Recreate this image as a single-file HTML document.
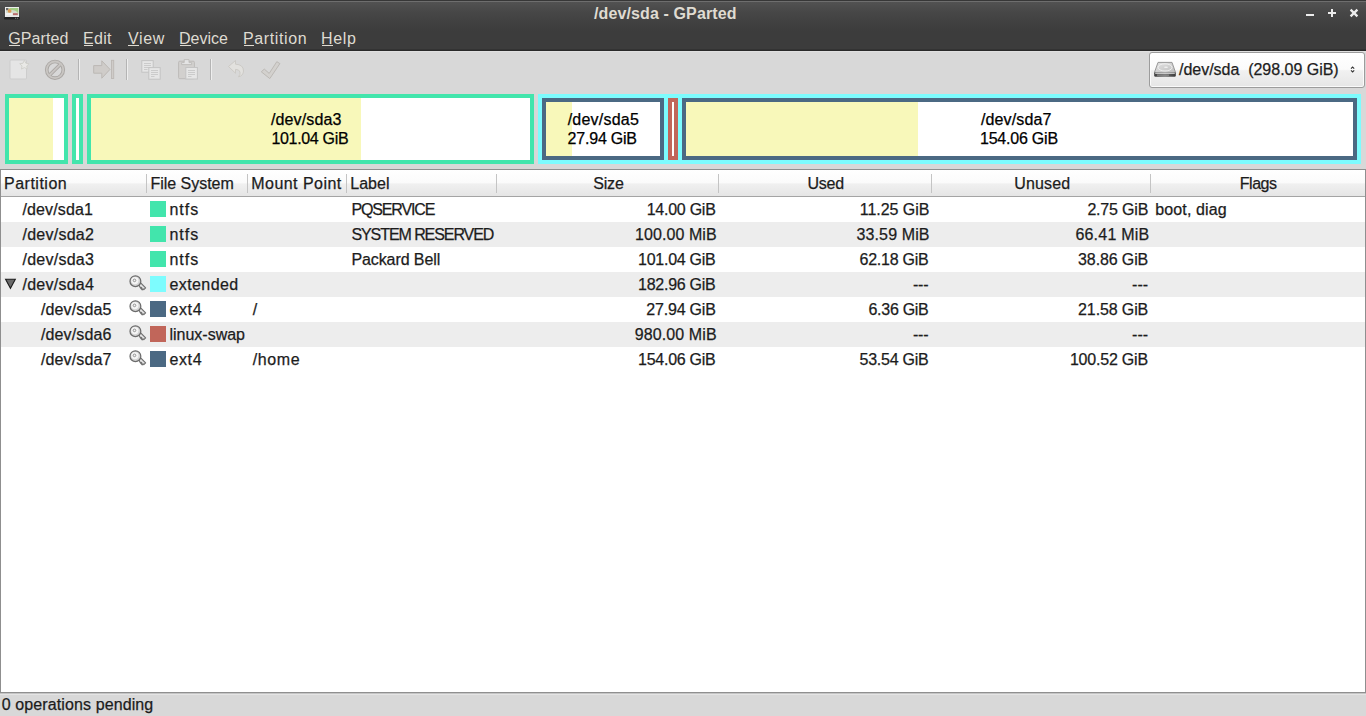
<!DOCTYPE html>
<html><head><meta charset="utf-8">
<style>
*{margin:0;padding:0;box-sizing:border-box}
html,body{width:1366px;height:716px;overflow:hidden;background:#d8d8d8;font-family:"Liberation Sans",sans-serif;}
.a{position:absolute}
.t{position:absolute;white-space:pre;line-height:20px;height:20px;font-size:16px;color:#1c1c1c;-webkit-text-stroke:0.25px currentColor}
#title{left:0;top:0;width:1366px;height:51px;background:linear-gradient(#525252 2px,#474747 12px,#3f3f3f 25px,#3c3c3c 32px,#3c3c3c 49px,#2a2a2a 50px)}
.top0{left:0;top:0;width:1366px;height:1px;background:#373737}
.top1{left:0;top:1px;width:1366px;height:1px;background:#6e6e6e}
#toolbar{left:0;top:51px;width:1366px;height:41px;background:#d8d8d8}
.sep{position:absolute;top:59px;width:1px;height:21px;background:#b4b4b4;box-shadow:1px 0 0 #eeeeee}
#combo{left:1149px;top:52px;width:216px;height:36px;border:1px solid #9c9c9c;border-radius:3px;background:linear-gradient(#ffffff,#fbfbfb 48%,#f1f1f1 52%,#e6e6e6);box-shadow:inset 0 0 0 1px rgba(255,255,255,0.8)}
.box{position:absolute;border:4px solid}
#tree{left:0;top:169px;width:1366px;height:524px;background:#fff;border:1px solid #8f8f8f}
#hdr{left:1px;top:170px;width:1364px;height:27px;background:linear-gradient(#ffffff,#fbfbfb 48%,#f0f0f0 54%,#e5e5e5);border-bottom:1px solid #a4a4a4}
.hsep{position:absolute;top:174px;width:1px;height:19px;background:#c4c4c4}
.row{position:absolute;left:1px;width:1364px;height:25px}
.alt{background:#ededed}
.sw{position:absolute;width:16px;height:16px}
#status{left:0;top:694px;width:1366px;height:22px;background:#d8d8d8}

#tbline{left:0;top:51px;width:1366px;height:1px;background:#e0e0e0}
#fline{left:0;top:693px;width:1366px;height:2px;background:linear-gradient(#c4c4c4 50%,#e4e4e4 50%)}

</style></head><body>
<div id="title" class="a"><div class="a top0"></div><div class="a top1"></div></div>
<div id="toolbar" class="a"></div><div id="tbline" class="a"></div>
<div class="sep" style="left:78px"></div>
<div class="sep" style="left:126px"></div>
<div class="sep" style="left:210px"></div>
<div id="combo" class="a"></div>
<div class="box" style="left:5px;top:94px;width:63px;height:70px;border-color:#42e5ac;background:#fff"><div class="a" style="left:0;top:0;width:44px;height:100%;background:#f8f8ba"></div></div>
<div class="box" style="left:72px;top:94px;width:11px;height:70px;border-color:#42e5ac;background:#fff"></div>
<div class="box" style="left:87px;top:94px;width:447px;height:70px;border-color:#42e5ac;background:#fff"><div class="a" style="left:0;top:0;width:270px;height:100%;background:#f8f8ba"></div></div>
<div class="box" style="left:538px;top:94px;width:823px;height:70px;border-color:#7dfcfe;background:#7dfcfe"></div>
<div class="box" style="left:542px;top:98px;width:122px;height:62px;border-color:#4b6983;background:#fff"><div class="a" style="left:0;top:0;width:26px;height:100%;background:#f8f8ba"></div></div>
<div class="box" style="left:668px;top:98px;width:10px;height:62px;border-color:#c1665a;background:#fff"></div>
<div class="box" style="left:682px;top:98px;width:675px;height:62px;border-color:#4b6983;background:#fff"><div class="a" style="left:0;top:0;width:232px;height:100%;background:#f8f8ba"></div></div>
<div id="tree" class="a"></div>
<div id="hdr" class="a"></div>
<div class="hsep" style="left:146px"></div>
<div class="hsep" style="left:247px"></div>
<div class="hsep" style="left:346px"></div>
<div class="hsep" style="left:496px"></div>
<div class="hsep" style="left:718px"></div>
<div class="hsep" style="left:931px"></div>
<div class="hsep" style="left:1150px"></div>
<div class="row" style="top:197px"></div>
<div class="row alt" style="top:222px"></div>
<div class="row" style="top:247px"></div>
<div class="row alt" style="top:272px"></div>
<div class="row" style="top:297px"></div>
<div class="row alt" style="top:322px"></div>
<div class="row" style="top:347px"></div>
<div class="sw" style="left:150px;top:201px;background:#42e5ac"></div>
<div class="sw" style="left:150px;top:226px;background:#42e5ac"></div>
<div class="sw" style="left:150px;top:251px;background:#42e5ac"></div>
<div class="sw" style="left:150px;top:276px;background:#7dfcfe"></div>
<div class="sw" style="left:150px;top:301px;background:#4b6983"></div>
<div class="sw" style="left:150px;top:326px;background:#c1665a"></div>
<div class="sw" style="left:150px;top:351px;background:#4b6983"></div>
<div id="status" class="a"></div><div id="fline" class="a"></div>
<div class="t" style="left:594.00px;top:4px;font-size:16px;font-weight:700;color:#dfdbd2;letter-spacing:0.118px;-webkit-text-stroke:0;">/dev/sda - GParted</div>
<div class="t" style="left:8.20px;top:29px;font-size:16px;color:#dfdbd2;letter-spacing:0.117px;-webkit-text-stroke:0;">GParted</div>
<div class="t" style="left:83.00px;top:29px;font-size:16px;color:#dfdbd2;letter-spacing:0.333px;-webkit-text-stroke:0;">Edit</div>
<div class="t" style="left:128.00px;top:29px;font-size:16px;color:#dfdbd2;letter-spacing:0.667px;-webkit-text-stroke:0;">View</div>
<div class="t" style="left:179.00px;top:29px;font-size:16px;color:#dfdbd2;-webkit-text-stroke:0;">Device</div>
<div class="t" style="left:243.00px;top:29px;font-size:16px;color:#dfdbd2;letter-spacing:0.625px;-webkit-text-stroke:0;">Partition</div>
<div class="t" style="left:321.00px;top:29px;font-size:16px;color:#dfdbd2;letter-spacing:0.667px;-webkit-text-stroke:0;">Help</div>
<div class="t" style="left:1179.00px;top:60px;font-size:16px;color:#1e1e1e;letter-spacing:-0.019px;">/dev/sda  (298.09 GiB)</div>
<div class="t" style="left:271.00px;top:110px;font-size:16px;color:#000;letter-spacing:0.125px;">/dev/sda3</div>
<div class="t" style="left:271.40px;top:129px;font-size:16px;color:#000;letter-spacing:-0.311px;">101.04 GiB</div>
<div class="t" style="left:567.70px;top:110px;font-size:16px;color:#000;letter-spacing:0.225px;">/dev/sda5</div>
<div class="t" style="left:567.60px;top:129px;font-size:16px;color:#000;letter-spacing:-0.213px;">27.94 GiB</div>
<div class="t" style="left:981.00px;top:110px;font-size:16px;color:#000;letter-spacing:0.125px;">/dev/sda7</div>
<div class="t" style="left:980.00px;top:129px;font-size:16px;color:#000;letter-spacing:-0.222px;">154.06 GiB</div>
<div class="t" style="left:4.00px;top:174px;font-size:16px;letter-spacing:0.500px;">Partition</div>
<div class="t" style="left:150.40px;top:174px;font-size:16px;letter-spacing:-0.020px;">File System</div>
<div class="t" style="left:251.30px;top:174px;font-size:16px;letter-spacing:0.450px;">Mount Point</div>
<div class="t" style="left:350.30px;top:174px;font-size:16px;">Label</div>
<div class="t" style="left:593.20px;top:174px;font-size:16px;letter-spacing:-0.167px;">Size</div>
<div class="t" style="left:807.50px;top:174px;font-size:16px;letter-spacing:-0.233px;">Used</div>
<div class="t" style="left:1014.30px;top:174px;font-size:16px;letter-spacing:0.120px;">Unused</div>
<div class="t" style="left:1239.80px;top:174px;font-size:16px;letter-spacing:-0.500px;">Flags</div>
<div class="t" style="left:22.50px;top:200px;font-size:16px;letter-spacing:0.125px;">/dev/sda1</div>
<div class="t" style="left:169.40px;top:200px;font-size:16px;letter-spacing:1.000px;">ntfs</div>
<div class="t" style="left:351.40px;top:200px;font-size:16px;letter-spacing:-1.125px;">PQSERVICE</div>
<div class="t" style="left:646.70px;top:200px;font-size:16px;letter-spacing:-0.250px;">14.00 GiB</div>
<div class="t" style="left:859.80px;top:200px;font-size:16px;letter-spacing:-0.037px;">11.25 GiB</div>
<div class="t" style="left:1087.40px;top:200px;font-size:16px;letter-spacing:-0.186px;">2.75 GiB</div>
<div class="t" style="left:1155.30px;top:200px;font-size:16px;letter-spacing:0.111px;">boot, diag</div>
<div class="t" style="left:22.50px;top:225px;font-size:16px;letter-spacing:0.250px;">/dev/sda2</div>
<div class="t" style="left:169.40px;top:225px;font-size:16px;letter-spacing:1.000px;">ntfs</div>
<div class="t" style="left:351.40px;top:225px;font-size:16px;letter-spacing:-1.071px;">SYSTEM RESERVED</div>
<div class="t" style="left:635.10px;top:225px;font-size:16px;letter-spacing:0.067px;">100.00 MiB</div>
<div class="t" style="left:856.50px;top:225px;font-size:16px;letter-spacing:0.125px;">33.59 MiB</div>
<div class="t" style="left:1075.40px;top:225px;font-size:16px;letter-spacing:0.213px;">66.41 MiB</div>
<div class="t" style="left:22.50px;top:250px;font-size:16px;letter-spacing:0.250px;">/dev/sda3</div>
<div class="t" style="left:169.40px;top:250px;font-size:16px;letter-spacing:1.000px;">ntfs</div>
<div class="t" style="left:351.40px;top:250px;font-size:16px;letter-spacing:-0.091px;">Packard Bell</div>
<div class="t" style="left:638.10px;top:250px;font-size:16px;letter-spacing:-0.267px;">101.04 GiB</div>
<div class="t" style="left:859.50px;top:250px;font-size:16px;letter-spacing:-0.250px;">62.18 GiB</div>
<div class="t" style="left:1078.10px;top:250px;font-size:16px;letter-spacing:-0.125px;">38.86 GiB</div>
<div class="t" style="left:22.50px;top:275px;font-size:16px;letter-spacing:0.250px;">/dev/sda4</div>
<div class="t" style="left:169.40px;top:275px;font-size:16px;letter-spacing:0.429px;">extended</div>
<div class="t" style="left:638.10px;top:275px;font-size:16px;letter-spacing:-0.267px;">182.96 GiB</div>
<div class="t" style="left:913.10px;top:275px;font-size:16px;letter-spacing:-0.300px;">---</div>
<div class="t" style="left:1132.10px;top:275px;font-size:16px;">---</div>
<div class="t" style="left:41.00px;top:300px;font-size:16px;letter-spacing:0.125px;">/dev/sda5</div>
<div class="t" style="left:169.40px;top:300px;font-size:16px;letter-spacing:0.667px;">ext4</div>
<div class="t" style="left:252.70px;top:300px;font-size:16px;">/</div>
<div class="t" style="left:646.30px;top:300px;font-size:16px;letter-spacing:-0.200px;">27.94 GiB</div>
<div class="t" style="left:868.50px;top:300px;font-size:16px;letter-spacing:-0.286px;">6.36 GiB</div>
<div class="t" style="left:1078.10px;top:300px;font-size:16px;letter-spacing:-0.125px;">21.58 GiB</div>
<div class="t" style="left:41.00px;top:325px;font-size:16px;letter-spacing:0.125px;">/dev/sda6</div>
<div class="t" style="left:169.40px;top:325px;font-size:16px;">linux-swap</div>
<div class="t" style="left:634.70px;top:325px;font-size:16px;letter-spacing:0.111px;">980.00 MiB</div>
<div class="t" style="left:913.10px;top:325px;font-size:16px;letter-spacing:-0.300px;">---</div>
<div class="t" style="left:1132.10px;top:325px;font-size:16px;">---</div>
<div class="t" style="left:41.00px;top:350px;font-size:16px;letter-spacing:0.125px;">/dev/sda7</div>
<div class="t" style="left:169.40px;top:350px;font-size:16px;letter-spacing:0.667px;">ext4</div>
<div class="t" style="left:252.70px;top:350px;font-size:16px;letter-spacing:0.600px;">/home</div>
<div class="t" style="left:638.10px;top:350px;font-size:16px;letter-spacing:-0.267px;">154.06 GiB</div>
<div class="t" style="left:859.50px;top:350px;font-size:16px;letter-spacing:-0.250px;">53.54 GiB</div>
<div class="t" style="left:1069.90px;top:350px;font-size:16px;letter-spacing:-0.200px;">100.52 GiB</div>
<div class="t" style="left:1.80px;top:695px;font-size:16px;letter-spacing:0.105px;">0 operations pending</div>
<!-- app icon -->
<svg class="a" style="left:0;top:0" width="24" height="24" viewBox="0 0 24 24">
  <rect x="4" y="16.9" width="15.8" height="2.6" rx="1" fill="#222"/>
  <rect x="15" y="17.8" width="1.2" height="1" fill="#777"/><rect x="17" y="17.8" width="1.2" height="1" fill="#777"/>
  <rect x="5" y="7" width="14" height="10" fill="#eeeeee"/>
  <rect x="6" y="8" width="12.3" height="7.6" fill="#d4dccb"/>
  <path d="M9 8 H18.3 V14 Q17 10 11 10 Z" fill="#a2cf84"/>
  <rect x="6" y="8" width="2.4" height="2.2" fill="#6a6a6a"/>
  <circle cx="9.6" cy="10.9" r="1.9" fill="#dd9a55"/>
  <rect x="6" y="13" width="6.5" height="2.6" fill="#f2f2f2"/>
  <rect x="13" y="13.2" width="4.8" height="2" fill="#b86a6a"/>
  <rect x="6" y="15.6" width="12.3" height="1" fill="#e6e6e6"/>
</svg>
<!-- window buttons -->
<div class="a" style="left:1306px;top:13.6px;width:8.2px;height:2.5px;background:#ececec"></div>
<div class="a" style="left:1328px;top:11.8px;width:8px;height:2.6px;background:#ececec"></div>
<div class="a" style="left:1330.7px;top:9px;width:2.6px;height:8px;background:#ececec"></div>
<svg class="a" style="left:1348px;top:7px" width="12" height="12" viewBox="0 0 12 12"><path d="M2.6 2.6 L9.4 9.4 M9.4 2.6 L2.6 9.4" stroke="#ececec" stroke-width="2.3" stroke-linecap="butt"/></svg>
<!-- menu underlines -->
<div class="a" style="left:9px;top:45px;width:11px;height:1px;background:#dfdbd2"></div>
<div class="a" style="left:84px;top:45px;width:9px;height:1px;background:#dfdbd2"></div>
<div class="a" style="left:128px;top:45px;width:11px;height:1px;background:#dfdbd2"></div>
<div class="a" style="left:180px;top:45px;width:11px;height:1px;background:#dfdbd2"></div>
<div class="a" style="left:244px;top:45px;width:10px;height:1px;background:#dfdbd2"></div>
<div class="a" style="left:322px;top:45px;width:11px;height:1px;background:#dfdbd2"></div>
<!-- toolbar icons -->
<svg class="a" style="left:0;top:51px" width="300" height="40" viewBox="0 51 300 40">
  <!-- new -->
  <rect x="10" y="60" width="16.5" height="19" rx="1" fill="#e5e5e5" stroke="#cdcdcd" stroke-width="1"/>
  <path d="M24.4 60.3 L25.9 63.3 L29.1 63.7 L26.8 65.9 L27.3 69.1 L24.4 67.6 L21.5 69.1 L22 65.9 L19.7 63.7 L22.9 63.3Z" fill="#e9e9e6" stroke="#cfcfca" stroke-width="0.9"/>
  <!-- delete -->
  <circle cx="55" cy="69.8" r="8.3" fill="none" stroke="#aaa7a4" stroke-width="3.6"/>
  <path d="M49.2 75.6 L60.8 64" stroke="#aaa7a4" stroke-width="3.6"/>
  <circle cx="55" cy="69.8" r="8.3" fill="none" stroke="#c9c6c3" stroke-width="1.8"/>
  <path d="M49.6 75.2 L60.4 64.4" stroke="#c9c6c3" stroke-width="1.8"/>
  <!-- resize/move arrow -->
  <path d="M93.7 65.6 H101.8 V60.8 L110 69.4 L101.8 78.2 V73.2 H93.7Z" fill="#cfccc9" stroke="#bcb8b4" stroke-width="1"/>
  <rect x="111.5" y="60.3" width="2.2" height="18.2" fill="#cfccc9" stroke="#bcb8b4" stroke-width="0.9"/>
  <!-- copy -->
  <rect x="141.8" y="60.6" width="11.4" height="11.6" fill="#e6e6e6" stroke="#c4c4c4" stroke-width="1"/>
  <path d="M144 63.5h7M144 65.5h7M144 67.5h7M144 69.5h3.5" stroke="#c6c6c6" stroke-width="0.85"/>
  <rect x="148.8" y="67.6" width="11.4" height="11.6" fill="#e6e6e6" stroke="#c4c4c4" stroke-width="1"/>
  <path d="M151 70.5h7M151 72.5h7M151 74.5h7M151 76.5h3.5" stroke="#c6c6c6" stroke-width="0.85"/>
  <!-- paste -->
  <rect x="178.6" y="61.2" width="15.8" height="17.5" rx="1.2" fill="#d2d0ce" stroke="#bdbbb9" stroke-width="1"/>
  <path d="M184.2 59.6 H189 V62.6 H191.6 V64.6 H181.6 V62.6 H184.2Z" fill="#e4e4e4" stroke="#bdbbb9" stroke-width="0.9" stroke-linejoin="round"/>
  <rect x="185.8" y="67.5" width="11.6" height="11.5" fill="#e6e6e6" stroke="#c4c4c4" stroke-width="1"/>
  <path d="M188 70.5h7M188 72.5h7M188 74.5h7M188 76.5h3.5" stroke="#c6c6c6" stroke-width="0.85"/>
  <!-- undo -->
  <path d="M228.5 66.5 L235.5 60.5 V64.2 Q243.5 64.5 243.5 71 Q243.3 75.8 238.5 76.8 Q240.6 74.5 240 72 Q239.3 69.3 235.5 69.4 V73.2Z" fill="#e2e1de" stroke="#c9c7c3" stroke-width="0.9"/>
  <!-- apply -->
  <path d="M261.3 71.8 L264.3 69.1 L269.2 73.4 L276.8 61.7 L279.9 63.6 L269.8 78.6Z" fill="#d3d1ce" stroke="#bcb9b5" stroke-width="1"/>
</svg>
<!-- combo: disk icon + arrows -->
<svg class="a" style="left:1150px;top:56px" width="30" height="28" viewBox="1150 56 30 28">
  <defs><linearGradient id="dg" x1="0" y1="0" x2="1" y2="1"><stop offset="0" stop-color="#e4e4e4"/><stop offset="1" stop-color="#bdbdbd"/></linearGradient>
  <linearGradient id="fb" x1="0" y1="0" x2="1" y2="0"><stop offset="0" stop-color="#3e3e3e"/><stop offset="0.5" stop-color="#6e6e6e"/><stop offset="1" stop-color="#3a3a3a"/></linearGradient></defs>
  <path d="M1158 62.4 H1172 L1175.6 72.6 H1154.4Z" fill="url(#dg)" stroke="#8e8e8e" stroke-width="0.9"/>
  <ellipse cx="1165" cy="67.4" rx="7" ry="3.6" fill="none" stroke="#f2f2f2" stroke-width="0.9"/>
  <ellipse cx="1166" cy="67.2" rx="2" ry="0.8" fill="#f0f0f0"/>
  <rect x="1154.2" y="72.2" width="21.6" height="4.6" rx="1.2" fill="url(#fb)"/>
  <rect x="1155.2" y="72.6" width="19.6" height="1.1" fill="#f4f4f4"/>
  <rect x="1157" y="74.6" width="12" height="1" fill="#9a9a9a"/>
</svg>
<svg class="a" style="left:1348px;top:64px" width="10" height="12" viewBox="0 0 10 12">
  <path d="M3 4.6 L4.6 3 L6.2 4.6" fill="none" stroke="#333" stroke-width="1.1"/>
  <path d="M3 6.4 L4.6 8 L6.2 6.4" fill="none" stroke="#333" stroke-width="1.1"/>
</svg>
<!-- expander triangle -->
<svg class="a" style="left:0;top:272px" width="24" height="24" viewBox="0 0 24 24">
  <path d="M5.6 7.2 H15.3 L10.45 16.3Z" fill="#6a6a6a" stroke="#1c1c1c" stroke-width="1.1" stroke-linejoin="miter"/>
</svg>
<svg class="a" style="left:126px;top:271px" width="24" height="24" viewBox="0 0 24 24">
  <path d="M12.6 13.4 L14.4 11.6 L19.6 16.8 L17.8 18.6 L17.1 17.9 L16.2 18.8 L15.3 17.9 L15.9 17.1 L15.2 16.4 L14.5 17.1 Z" fill="#e4e4e4" stroke="#707070" stroke-width="1.2" stroke-linejoin="round"/>
  <circle cx="9.4" cy="10.2" r="5.4" fill="#d4d4d4" stroke="#6c6c6c" stroke-width="1.25"/>
  <circle cx="8.9" cy="9.6" r="3.6" fill="#f4f4f4"/>
  <circle cx="8.5" cy="9.4" r="1.3" fill="none" stroke="#8a8a8a" stroke-width="0.9"/>
</svg>
<svg class="a" style="left:126px;top:296px" width="24" height="24" viewBox="0 0 24 24">
  <path d="M12.6 13.4 L14.4 11.6 L19.6 16.8 L17.8 18.6 L17.1 17.9 L16.2 18.8 L15.3 17.9 L15.9 17.1 L15.2 16.4 L14.5 17.1 Z" fill="#e4e4e4" stroke="#707070" stroke-width="1.2" stroke-linejoin="round"/>
  <circle cx="9.4" cy="10.2" r="5.4" fill="#d4d4d4" stroke="#6c6c6c" stroke-width="1.25"/>
  <circle cx="8.9" cy="9.6" r="3.6" fill="#f4f4f4"/>
  <circle cx="8.5" cy="9.4" r="1.3" fill="none" stroke="#8a8a8a" stroke-width="0.9"/>
</svg>
<svg class="a" style="left:126px;top:321px" width="24" height="24" viewBox="0 0 24 24">
  <path d="M12.6 13.4 L14.4 11.6 L19.6 16.8 L17.8 18.6 L17.1 17.9 L16.2 18.8 L15.3 17.9 L15.9 17.1 L15.2 16.4 L14.5 17.1 Z" fill="#e4e4e4" stroke="#707070" stroke-width="1.2" stroke-linejoin="round"/>
  <circle cx="9.4" cy="10.2" r="5.4" fill="#d4d4d4" stroke="#6c6c6c" stroke-width="1.25"/>
  <circle cx="8.9" cy="9.6" r="3.6" fill="#f4f4f4"/>
  <circle cx="8.5" cy="9.4" r="1.3" fill="none" stroke="#8a8a8a" stroke-width="0.9"/>
</svg>
<svg class="a" style="left:126px;top:346px" width="24" height="24" viewBox="0 0 24 24">
  <path d="M12.6 13.4 L14.4 11.6 L19.6 16.8 L17.8 18.6 L17.1 17.9 L16.2 18.8 L15.3 17.9 L15.9 17.1 L15.2 16.4 L14.5 17.1 Z" fill="#e4e4e4" stroke="#707070" stroke-width="1.2" stroke-linejoin="round"/>
  <circle cx="9.4" cy="10.2" r="5.4" fill="#d4d4d4" stroke="#6c6c6c" stroke-width="1.25"/>
  <circle cx="8.9" cy="9.6" r="3.6" fill="#f4f4f4"/>
  <circle cx="8.5" cy="9.4" r="1.3" fill="none" stroke="#8a8a8a" stroke-width="0.9"/>
</svg>
</body></html>
